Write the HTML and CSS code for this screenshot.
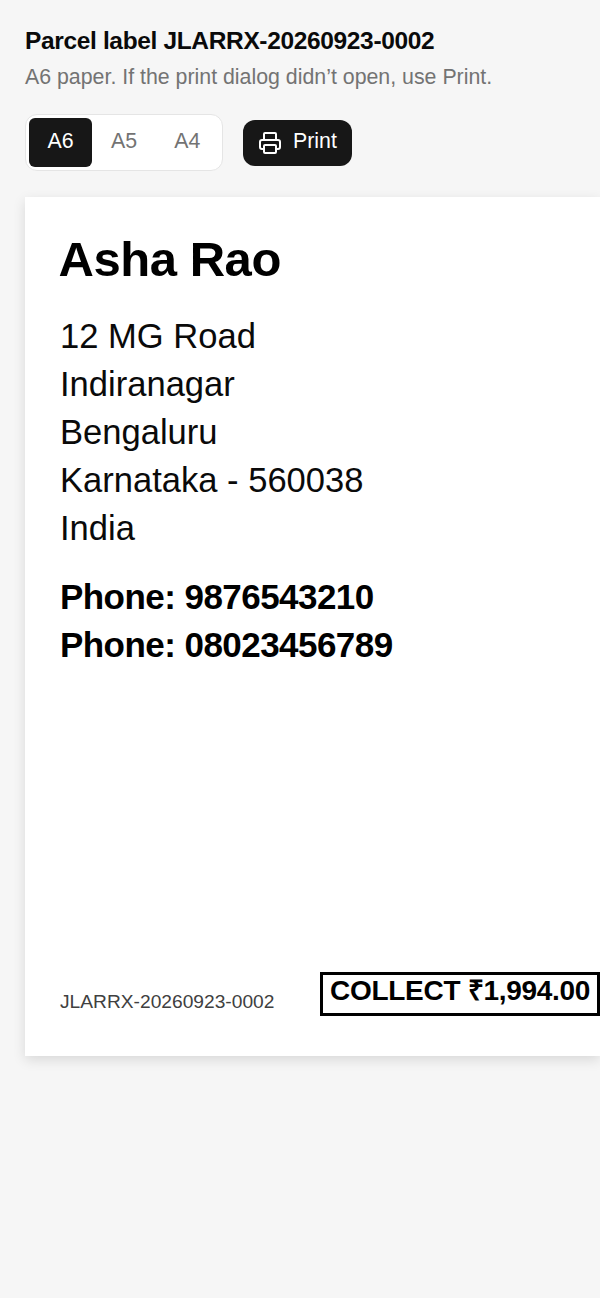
FILE: index.html
```html
<!DOCTYPE html>
<html lang="en">
<head>
<meta charset="utf-8">
<title>Parcel label JLARRX-20260923-0002</title>
<link rel="stylesheet" href="styles.css">
</head>
<body>
<main class="page">
  <header class="intro">
    <h1 class="title">Parcel label JLARRX-20260923-0002</h1>
    <p class="hint">A6 paper. If the print dialog didn’t open, use Print.</p>
  </header>
  <div class="toolbar">
    <div class="sizes">
      <button class="size size-active">A6</button>
      <button class="size">A5</button>
      <button class="size">A4</button>
    </div>
    <button class="print">
      <svg class="print-icon" viewBox="0 0 24 24" fill="none" stroke="currentColor" stroke-width="2" stroke-linecap="round" stroke-linejoin="round"><path d="M6 9V3a1 1 0 0 1 1-1h10a1 1 0 0 1 1 1v6"/><path d="M6 18H4a2 2 0 0 1-2-2v-5a2 2 0 0 1 2-2h16a2 2 0 0 1 2 2v5a2 2 0 0 1-2 2h-2"/><rect x="6" y="14" width="12" height="8" rx="1"/></svg>
      <span class="print-text">Print</span>
    </button>
  </div>
  <section class="label">
    <h2 class="name">Asha Rao</h2>
    <address class="address">
      <div>12 MG Road</div>
      <div>Indiranagar</div>
      <div>Bengaluru</div>
      <div>Karnataka - 560038</div>
      <div>India</div>
    </address>
    <div class="phones">
      <div>Phone: 9876543210</div>
      <div>Phone: 08023456789</div>
    </div>
    <footer class="foot">
      <span class="ref">JLARRX-20260923-0002</span>
      <span class="collect">COLLECT ₹1,994.00</span>
    </footer>
  </section>
</main>
</body>
</html>
```
FILE: styles.css
```css
html, body {
  margin: 0;
  height: 100%;
  overflow: hidden;
  background: #f6f6f6;
}
body {
  font-family: "Liberation Sans", Arial, sans-serif;
  color: #000;
}
.page {
  padding: 25px 0 0 25px;
  width: 575px;
  box-sizing: border-box;
}
.intro { margin: 0; }
.title {
  margin: 0;
  font-size: 24.5px;
  line-height: 32px;
  font-weight: 700;
  letter-spacing: -0.35px;
  color: #0a0a0a;
}
.hint {
  margin: 6px 0 0;
  font-size: 21.33px;
  line-height: 28px;
  color: #737373;
}
.toolbar {
  display: flex;
  align-items: center;
  gap: 20px;
  margin-top: 23px;
}
.sizes {
  display: flex;
  padding: 3px;
  background: #fff;
  border: 1px solid #e5e5e5;
  border-radius: 12px;
}
.size {
  width: 63.33px;
  height: 49px;
  padding: 0 0 4px;
  border: 0;
  border-radius: 6px;
  background: transparent;
  color: #737373;
  font: 21.33px/28px "Liberation Sans", Arial, sans-serif;
}
.size-active {
  background: #171717;
  color: #fff;
}
.print {
  display: flex;
  align-items: center;
  gap: 11px;
  height: 46px;
  width: 109px;
  padding: 0 0 0 15px;
  border: 0;
  border-radius: 12px;
  background: #171717;
  color: #fff;
  font: 21.33px/28px "Liberation Sans", Arial, sans-serif;
}
.print-text { padding-bottom: 4px; }
.print-icon { width: 24px; height: 24px; flex: none; }
.label {
  display: flex;
  flex-direction: column;
  box-sizing: border-box;
  width: 575px;
  height: 859px;
  margin-top: 26px;
  padding: 32px 0 40px 35px;
  background: #fff;
  box-shadow: 0 4px 12px rgba(0, 0, 0, 0.12);
}
.name {
  margin: 0 0 0 -1.5px;
  font-size: 49px;
  line-height: 60px;
  font-weight: 700;
  letter-spacing: -0.45px;
}
.address {
  margin-top: 23px;
  font-style: normal;
  font-size: 34.56px;
  line-height: 48px;
  color: #0a0a0a;
}
.phones {
  margin-top: 21px;
  font-size: 35px;
  line-height: 48px;
  font-weight: 700;
  letter-spacing: -0.55px;
}
.foot {
  display: flex;
  align-items: flex-end;
  justify-content: space-between;
  margin-top: auto;
}
.ref {
  font-size: 19.2px;
  line-height: 28px;
  color: #404040;
}
.collect {
  box-sizing: border-box;
  height: 44px;
  padding: 0 7px;
  border: 3px solid #000;
  font-size: 28px;
  line-height: 32px;
  font-weight: 700;
  letter-spacing: -0.3px;
  white-space: nowrap;
}
```
